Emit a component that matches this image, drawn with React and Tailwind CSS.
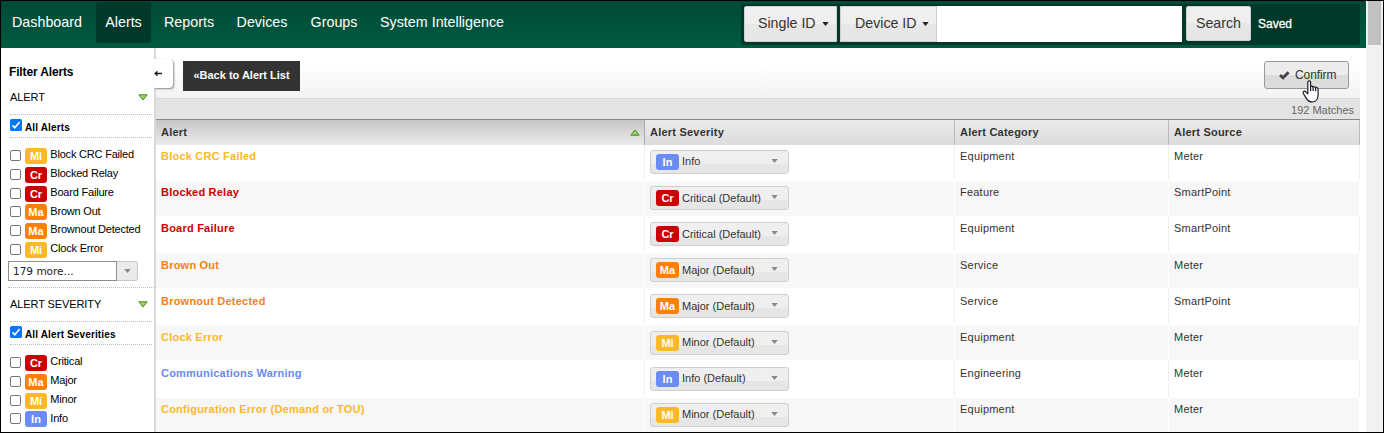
import React from "react";

const BADGES = {
  Mi: "bg-[#fdb827]",
  Cr: "bg-[#cc0000]",
  Ma: "bg-[#ff8000]",
  In: "bg-[#6b8cf7]",
};

const TEXT_COLORS = {
  Mi: "text-[#fbb829]",
  Cr: "text-[#cc0000]",
  Ma: "text-[#f98015]",
  In: "text-[#6a8af0]",
};

const ALERTS = [
  ["Block CRC Failed", "Mi", "In", "Info", "Equipment", "Meter"],
  ["Blocked Relay", "Cr", "Cr", "Critical (Default)", "Feature", "SmartPoint"],
  ["Board Failure", "Cr", "Cr", "Critical (Default)", "Equipment", "SmartPoint"],
  ["Brown Out", "Ma", "Ma", "Major (Default)", "Service", "Meter"],
  ["Brownout Detected", "Ma", "Ma", "Major (Default)", "Service", "SmartPoint"],
  ["Clock Error", "Mi", "Mi", "Minor (Default)", "Equipment", "Meter"],
  ["Communications Warning", "In", "In", "Info (Default)", "Engineering", "Meter"],
  ["Configuration Error (Demand or TOU)", "Mi", "Mi", "Minor (Default)", "Equipment", "Meter"],
];

const ALERT_FILTERS = [
  ["Mi", "Block CRC Failed"],
  ["Cr", "Blocked Relay"],
  ["Cr", "Board Failure"],
  ["Ma", "Brown Out"],
  ["Ma", "Brownout Detected"],
  ["Mi", "Clock Error"],
];

const SEVERITY_FILTERS = [
  ["Cr", "Critical"],
  ["Ma", "Major"],
  ["Mi", "Minor"],
  ["In", "Info"],
];

const COLS = "grid grid-cols-[489px_310px_214px_191px]";

function Badge({ code, className = "" }) {
  return (
    <span
      className={`flex h-4 shrink-0 items-center justify-center rounded-[3px] text-[11px] leading-4 font-bold text-white ${BADGES[code]} ${className}`}
    >
      {code}
    </span>
  );
}

function Caret({ className = "" }) {
  return (
    <svg viewBox="0 0 8 5" className={`h-[4px] w-[7px] shrink-0 ${className}`}>
      <path d="M0 0h8L4 5z" fill="currentColor" />
    </svg>
  );
}

function GreenTriangle({ up, className = "" }) {
  return (
    <svg viewBox="0 0 10 7" className={`h-[7px] w-[10px] shrink-0 ${className}`}>
      <path
        d={up ? "M.8 6.2L5 1l4.200 5.200z" : "M.8.8h8.400L5 6z"}
        fill="#9bd45c"
        stroke="#4a8a22"
        strokeWidth="1"
        strokeLinejoin="round"
      />
    </svg>
  );
}

function Checked() {
  return (
    <svg viewBox="0 0 12 12" className="h-3 w-3 shrink-0">
      <rect width="12" height="12" rx="1.500" fill="#0075ff" />
      <path d="M2.500 6.300L4.800 8.700L9.600 3" fill="none" stroke="#fff" strokeWidth="1.700" />
    </svg>
  );
}

function NavItem({ children, active, className }) {
  return (
    <div
      className={`flex h-[41px] items-center justify-center rounded-[3px] text-[14.300px] text-white ${active ? "bg-[#003829]" : ""} ${className}`}
    >
      {children}
    </div>
  );
}

function FilterRow({ code, label }) {
  return (
    <div className="flex h-[18.800px]">
      <span className="mt-[2px] h-[11px] w-[11px] shrink-0 rounded-[2px] border border-[#767676] bg-white" />
      <Badge code={code} className="ml-1 w-[22px]" />
      <span className="ml-[3.300px] pt-[0.300px] text-[11px] leading-[13px] tracking-[-0.200px] whitespace-nowrap text-black">
        {label}
      </span>
    </div>
  );
}

function FilterHeading({ title, all, className }) {
  return (
    <div className={`ml-[9px] w-[142px] ${className}`}>
      <div className="flex h-4 items-center justify-between pr-1 text-[11px] text-black">
        <span className="tracking-[-0.100px]">{title}</span>
        <GreenTriangle />
      </div>
      <div className="mt-[9px] flex h-[24px] border-y border-dotted border-[#bdbdbd] pt-[4px]">
        <Checked />
        <span className="ml-[3px] pt-[1px] text-[10px] leading-[15px] font-bold tracking-[0.130px] whitespace-nowrap text-black">
          {all}
        </span>
      </div>
    </div>
  );
}

function Sidebar() {
  return (
    <aside className="flex w-[155px] shrink-0 flex-col border-r-2 border-[#d9d9d9] bg-white">
      <h2 className="mt-[16px] ml-[8px] text-[12px] leading-4 font-bold tracking-[-0.150px] text-black">
        Filter Alerts
      </h2>
      <FilterHeading title="ALERT" all="All Alerts" className="mt-[9px]" />
      <div className="mt-[10px] ml-[9px] h-[113px]">
        {ALERT_FILTERS.map(([code, label]) => (
          <FilterRow key={label} code={code} label={label} />
        ))}
      </div>
      <div className="ml-[7px] flex h-5 w-[130px] text-[11px]">
        <div className="flex w-[109px] items-center border border-[#8f8f8f] pt-[2px] pl-[4px] font-['DejaVu_Sans',sans-serif] text-[10.500px] text-[#222]">
          179 more...
        </div>
        <div className="flex flex-1 items-center justify-center rounded-r-[3px] border border-l-0 border-[#c8c8c8] bg-[#ebebeb] text-[#888]">
          <Caret />
        </div>
      </div>
      <div className="mt-[6px] ml-[7px] border-t border-dotted border-[#bdbdbd]" />
      <FilterHeading title="ALERT SEVERITY" all="All Alert Severities" className="mt-[8px]" />
      <div className="mt-[10px] ml-[9px]">
        {SEVERITY_FILTERS.map(([code, label]) => (
          <FilterRow key={label} code={code} label={label} />
        ))}
      </div>
    </aside>
  );
}

function SearchBar() {
  const button =
    "flex items-center border border-[#cfcfcf] bg-linear-to-b from-[#efefef] from-50% to-[#e6e6e6] to-50% text-[14.200px] text-[#333] whitespace-nowrap";
  return (
    <div className="mt-[3px] mr-[6px] ml-auto flex h-[41px] w-[619px] rounded-[3px] bg-[#003829] pt-[2px] pl-[3px]">
      <div className={`${button} h-[36px] w-[93px] rounded-l-[2px] pl-[13px]`}>
        <span className="w-[57px]">Single ID</span>
        <Caret className="ml-[7px] text-[#222]" />
      </div>
      <div className={`${button} ml-[3px] h-[36px] w-[97px] pl-[14px]`}>
        <span className="w-[60px]">Device ID</span>
        <Caret className="ml-[7px] text-[#222]" />
      </div>
      <div className="h-[36px] w-[245px] bg-white" />
      <div className={`${button} ml-[4px] h-[35px] w-[65px] justify-center rounded-[2px]`}>Search</div>
      <div className="ml-[7px] flex h-[36px] items-center text-[12px] text-white [-webkit-text-stroke:0.300px_white]">
        Saved
      </div>
    </div>
  );
}

function HandCursor() {
  return (
    <svg viewBox="0 0 18 23" className="absolute top-[18px] left-[37px] h-[23px] w-[18px]">
      <path
        d="M5.800 2.200c0-1.900 2.800-1.900 2.800 0v4.300c.7-.7 2.200-.5 2.500.5.800-.7 2.100-.3 2.500.7 1-.6 2.500 0 2.500 1.500v5.200c0 4.600-2.300 7.600-5.700 7.600-3.200 0-4.800-1.300-6.200-3.900L1.400 13.600c-1-2 1-3.100 2.400-1.800l2 2z"
        fill="#fff"
        stroke="#1a1a2a"
        strokeWidth="1.200"
        strokeLinejoin="round"
      />
      <path d="M8.600 6.500v4.500M11.100 7v4M13.600 7.700v3.500" stroke="#1a1a2a" strokeWidth="1.200" />
    </svg>
  );
}

function Toolbar() {
  return (
    <div className="flex h-[50px] bg-linear-to-b from-white from-30% to-[#f2f2f2]">
      <div className="mt-[11px] -ml-[2px] flex h-[29px] w-[19px] items-center rounded-r-[4px] bg-white shadow-[1px_1px_2px_rgba(0,0,0,0.450)]">
        <svg viewBox="0 0 8 7" className="mb-[1px] h-[7px] w-[8px]">
          <path d="M0 3.500L3.500.5v2.200H8v1.600H3.500v2.200z" fill="#222" />
        </svg>
      </div>
      <div className="mt-[13px] ml-[10px] flex h-[30px] w-[117px] items-center justify-center bg-[#333] pb-[2px] text-[11px] font-bold text-white">
        «Back to Alert List
      </div>
      <div className="relative mt-[13px] mr-[11px] ml-auto flex h-[28px] w-[85px] items-center rounded-[3px] border border-[#999] bg-linear-to-b from-[#ececec] from-50% to-[#dcdcdc] to-50% pl-[14px] text-[12px] tracking-[-0.100px] text-[#333]">
        <svg viewBox="0 0 11 9" className="mr-[5px] h-[9px] w-[11px]">
          <path d="M1 4.200L4 6.800L9.600 1.200" fill="none" stroke="#444" strokeWidth="2.900" />
        </svg>
        Confirm
        <HandCursor />
      </div>
    </div>
  );
}

function SeveritySelect({ code, label }) {
  return (
    <div className="mt-[5.300px] ml-[5px] flex h-[24px] w-[139px] items-center rounded-[3px] border border-[#cfcfcf] bg-linear-to-b from-[#efefef] from-60% to-[#e6e6e6] to-60% pl-[5px] text-[11px] text-[#333]">
      <Badge code={code} className="w-[23px]" />
      <span className="ml-[3px] whitespace-nowrap">{label}</span>
      <Caret className="mr-[10px] mb-[2px] ml-auto text-[#888]" />
    </div>
  );
}

function AlertTable() {
  return (
    <div className="w-[1204px] text-[11px] tracking-[0.220px] text-[#333]">
      <div className={`${COLS} h-[25.700px] border-t border-b border-t-[#888] border-b-white font-bold leading-[25px]`}>
        <div className="flex items-center justify-between border-r border-[#aaa] bg-linear-to-b from-[#c6c6c6] to-[#ebebeb] pr-[4px] pl-[5px]">
          Alert
          <GreenTriangle up />
        </div>
        <div className="border-r border-[#bbb] bg-linear-to-b from-[#ebebeb] to-[#dcdcdc] pl-[5px]">
          Alert Severity
        </div>
        <div className="border-r border-[#bbb] bg-linear-to-b from-[#ebebeb] to-[#dcdcdc] pl-[5px]">
          Alert Category
        </div>
        <div className="border-r border-[#bbb] bg-linear-to-b from-[#ebebeb] to-[#dcdcdc] pl-[5px]">
          Alert Source
        </div>
      </div>
      {ALERTS.map(([name, color, code, severity, category, source], i) => {
        const cell = `border-r border-b border-b-white ${i % 2 ? "border-r-white bg-[#f7f7f7]" : "border-r-[#f0f0f0] bg-white"}`;
        return (
          <div key={name} className={`${COLS} h-[36.140px] leading-[13px]`}>
            <div className={`${cell} pt-[5.500px] pl-[5px] font-bold ${TEXT_COLORS[color]}`}>{name}</div>
            <div className={`${cell} tracking-normal`}>
              <SeveritySelect code={code} label={severity} />
            </div>
            <div className={`${cell} pt-[5.500px] pl-[5px]`}>{category}</div>
            <div className={`${cell} pt-[5.500px] pl-[5px]`}>{source}</div>
          </div>
        );
      })}
    </div>
  );
}

export default function App() {
  return (
    <div className="flex h-[433px] w-[1384px] overflow-hidden border border-black bg-white font-['Liberation_Sans',Arial,sans-serif]">
      <div className="flex w-[1365px] shrink-0 flex-col">
        <header className="flex h-[47px] shrink-0 bg-linear-to-b from-[#004a36] to-[#005a42]">
          <nav className="flex pt-[1px]">
            <NavItem className="w-[92px]">Dashboard</NavItem>
            <NavItem active className="ml-[3px] w-[55px]">
              Alerts
            </NavItem>
            <NavItem className="ml-[3px] w-[70px]">Reports</NavItem>
            <NavItem className="ml-[3px] w-[70px]">Devices</NavItem>
            <NavItem className="ml-[3px] w-[68px]">Groups</NavItem>
            <NavItem className="ml-[2px] w-[144px]">System Intelligence</NavItem>
          </nav>
          <SearchBar />
        </header>
        <div className="flex min-h-0 flex-1">
          <Sidebar />
          <main className="w-[1204px]">
            <Toolbar />
            <div className="flex h-[21px] items-center justify-end border-t border-[#d8d8d8] bg-[#e3e3e3] pt-[2px] pr-[6px] text-[11px] text-[#666]">
              192 Matches
            </div>
            <AlertTable />
          </main>
        </div>
      </div>
      <div className="flex flex-1 flex-col bg-[#f1f1f1] px-[2px]">
        <div className="h-[44px] w-[13px] bg-[#c1c1c1]" />
      </div>
    </div>
  );
}
